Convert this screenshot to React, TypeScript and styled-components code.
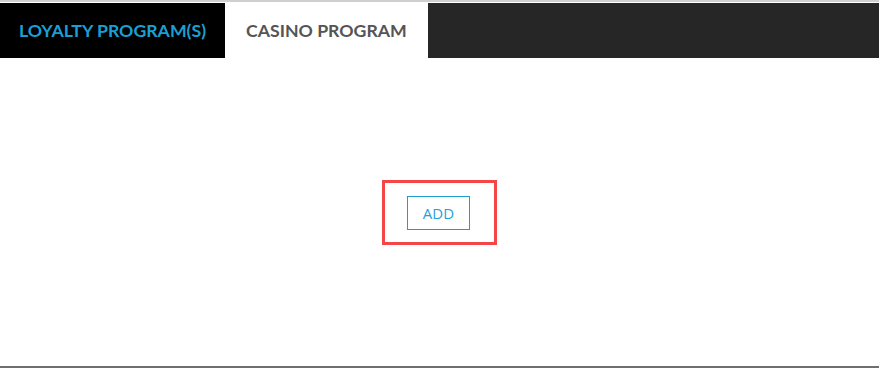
import React, { useState } from "react";
import styled, { createGlobalStyle } from "styled-components";

const Global = createGlobalStyle`
  html, body { margin: 0; padding: 0; background: #fff; }
  body { font-family: Lato, "Open Sans", Arial, sans-serif; }
  * { box-sizing: border-box; }
`;

const Page = styled.div`
  width: 879px;
  height: 368px;
  display: flex;
  flex-direction: column;
  border-top: 2px solid #cfcfcf;
  border-bottom: 2px solid #6f6f6f;
  background: #fff;
`;

const TabBar = styled.nav`
  display: flex;
  height: 55px;
  margin-top: 1px;
  background: #262626;
`;

const Tab = styled.button<{ $active?: boolean; $dark?: boolean }>`
  border: none;
  margin: 0;
  height: 100%;
  padding: 0 ${(p) => (p.$dark ? "19px" : "21px")};
  background: ${(p) => (p.$active ? "#ffffff" : p.$dark ? "#000000" : "transparent")};
  color: ${(p) => (p.$active ? "#555555" : "#1a9fd4")};
  font-family: Lato, "Open Sans", Arial, sans-serif;
  font-weight: 700;
  font-size: 17.7px;
  letter-spacing: 0;
  text-transform: uppercase;
  cursor: pointer;
  display: flex;
  align-items: center;
  padding-bottom: 1px;
`;

const Body = styled.main`
  flex: 1;
  display: flex;
  align-items: center;
  justify-content: center;
`;

const Highlight = styled.div`
  border: 3px solid #f44646;
  padding: 13px 24px 12px 22px;
  display: flex;
`;

const AddButton = styled.button`
  width: 63px;
  height: 34px;
  border: 1px solid #1ba0c9;
  background: #fff;
  color: #2a9fd6;
  font-family: "Open Sans", Lato, Arial, sans-serif;
  font-size: 15px;
  padding: 0;
  cursor: pointer;
`;

export default function App() {
  const [active, setActive] = useState(1);
  return (
    <>
      <Global />
      <Page>
        <TabBar>
          <Tab $dark $active={active === 0} onClick={() => setActive(0)}>
            Loyalty Program(s)
          </Tab>
          <Tab $active={active === 1} onClick={() => setActive(1)}>
            Casino Program
          </Tab>
        </TabBar>
        <Body>
          <Highlight>
            <AddButton>ADD</AddButton>
          </Highlight>
        </Body>
      </Page>
    </>
  );
}
